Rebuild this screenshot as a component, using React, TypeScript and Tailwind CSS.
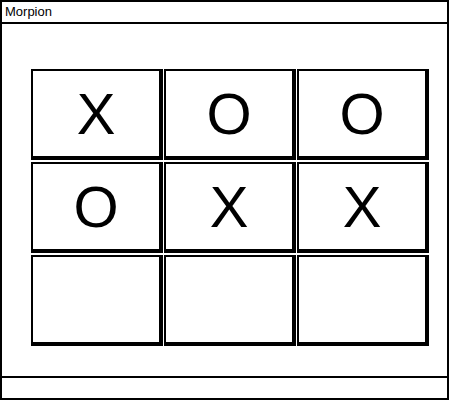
const cells = ["X", "O", "O", "O", "X", "X", "", "", ""]

export default function App() {
  return (
    <div className="w-[450px] h-[400px] bg-white">
      <div className="w-[449px] h-[400px] border-2 border-black flex flex-col font-['Liberation_Sans',sans-serif] text-black">
        <div className="h-[22px] border-b-2 border-black px-[3px] text-[13px] leading-[20px]">Morpion</div>
        <div className="flex-1 pt-[45px] pl-[29px]">
          <div className="grid grid-cols-[132px_132px_132px] grid-rows-[91px_91px_91px] gap-x-[1px] gap-y-[2px]">
            {cells.map((c, i) => (
              <div
                key={i}
                className="border-t-2 border-l-2 border-r-4 border-b-4 border-black flex items-center justify-center text-[58px] leading-none"
              >
                {c}
              </div>
            ))}
          </div>
        </div>
        <div className="h-[22px] border-t-2 border-black"></div>
      </div>
    </div>
  )
}
